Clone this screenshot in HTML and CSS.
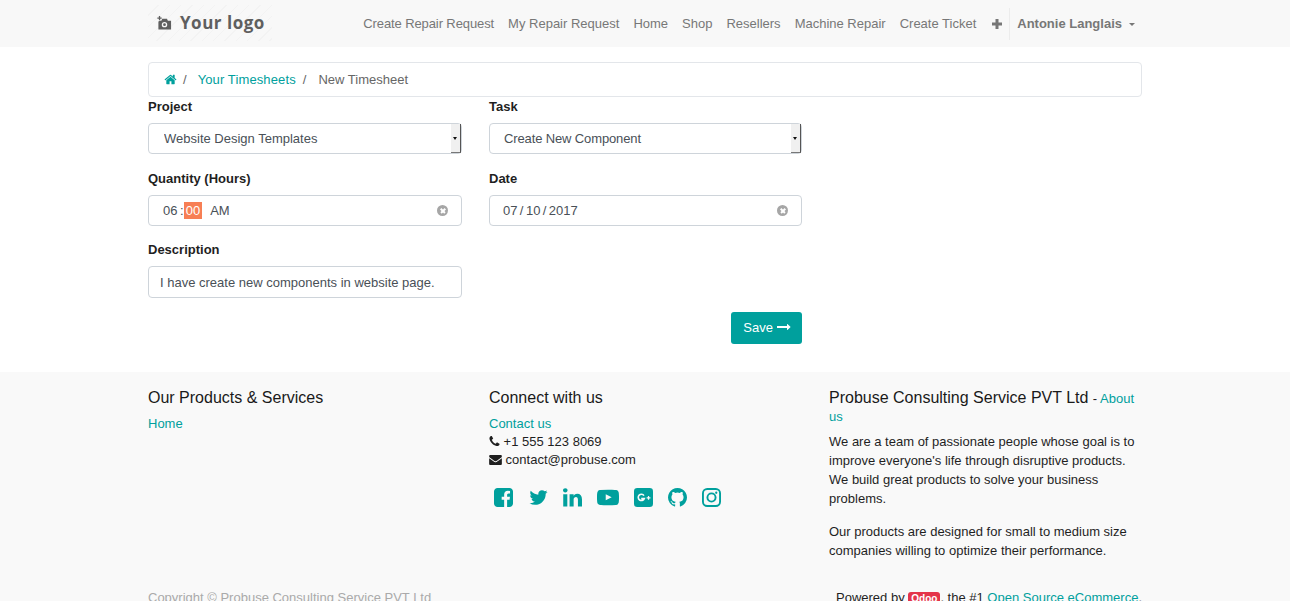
FILE: index.html
```html
<!DOCTYPE html>
<html lang="en">
<head>
  <meta charset="UTF-8">
  <meta name="viewport" content="width=device-width, initial-scale=1.0">
  <title>New Timesheet</title>
  <link rel="stylesheet" href="styles.css">
</head>
<body>
  <header class="navbar">
    <div class="container navbar-inner">
      <a class="logo" href="#">
        <svg class="logo-icon" viewBox="0 0 16 16"><path d="M2 0h1.400v1.600H5v1.300H3.400v1.500H2V2.900H.4V1.600H2zM3 5h1.600l1-2h5l1 2H15v9.500H1.500V5.800zM8 6.300a2.900 2.900 0 1 0 0 5.800 2.900 2.900 0 0 0 0-5.800zm0 1.400a1.500 1.500 0 1 1 0 3 1.500 1.500 0 0 1 0-3z"/></svg>
        <span>Your logo</span>
      </a>
      <nav class="nav">
        <a href="#">Create Repair Request</a>
        <a href="#">My Repair Request</a>
        <a href="#">Home</a>
        <a href="#">Shop</a>
        <a href="#">Resellers</a>
        <a href="#">Machine Repair</a>
        <a href="#">Create Ticket</a>
        <a class="nav-plus" href="#"><svg viewBox="0 0 12 12"><path d="M4.500 1h3v3.500H11v3H7.500V11h-3V7.500H1v-3h3.500z"/></svg></a>
        <a class="nav-user" href="#">Antonie Langlais <span class="caret"></span></a>
      </nav>
    </div>
  </header>

  <main class="container">
    <ol class="breadcrumb">
      <li><a href="#"><svg class="icon-home" viewBox="0 0 1792 1792"><path d="M1472 992v480q0 26-19 45t-45 19h-384v-384h-256v384h-384q-26 0-45-19t-19-45v-480q0-1 .5-3t.5-3l575-474 575 474q1 2 1 6zm223-69l-62 74q-8 9-21 11h-3q-13 0-21-7l-692-577-692 577q-12 8-24 7-13-2-21-11l-62-74q-8-10-7-23.500t11-21.500l719-599q32-26 76-26t76 26l244 204v-195q0-14 9-23t23-9h192q14 0 23 9t9 23v408l219 182q10 8 11 21.500t-7 23.500z"/></svg></a></li>
      <li class="sep">/</li>
      <li><a class="crumb-link" href="#">Your Timesheets</a></li>
      <li class="sep">/</li>
      <li class="active">New Timesheet</li>
    </ol>

    <form class="form-grid">
      <div class="field">
        <label>Project</label>
        <div class="select-box">
          <select class="control"><option>Website Design Templates</option></select>
          <span class="select-arrow"></span>
        </div>
      </div>
      <div class="field">
        <label>Task</label>
        <div class="select-box">
          <select class="control select-task"><option>Create New Component</option></select>
          <span class="select-arrow"></span>
        </div>
      </div>
      <div class="field field-next">
        <label>Quantity (Hours)</label>
        <div class="control picker">
          <span class="hours">06 :</span><span class="picked">00</span><span class="ampm">AM</span>
          <span class="clear"></span>
        </div>
      </div>
      <div class="field field-next">
        <label>Date</label>
        <div class="control picker picker-date">
          <span>07 / 10 / 2017</span>
          <span class="clear"></span>
        </div>
      </div>
      <div class="field field-desc">
        <label>Description</label>
        <input class="control text-input" type="text" value="I have create new components in website page.">
      </div>
      <div class="form-actions">
        <button type="button" class="btn-save">Save <svg viewBox="0 0 1792 1792"><path d="M1728 893q0 14-10 24l-384 354q-16 14-35 6-19-9-19-29v-224h-1248q-14 0-23-9t-9-23v-192q0-14 9-23t23-9h1248v-224q0-21 19-29t35 5l384 350q10 10 10 23z"/></svg></button>
      </div>
    </form>
  </main>

  <footer class="footer">
    <div class="container">
      <div class="footer-cols">
        <div>
          <h4>Our Products &amp; Services</h4>
          <a href="#">Home</a>
        </div>
        <div>
          <h4>Connect with us</h4>
          <div class="contact-line"><a href="#">Contact us</a></div>
          <div class="contact-line"><svg class="icon-sm" viewBox="128 128 1536 1536"><path d="M1600 1240q0 27-10 70.500t-21 68.500q-21 50-122 106-94 51-186 51-27 0-53-3.500t-57.500-12.500-47-14.500-55.500-20.500-49-18q-98-35-175-83-127-79-264-216t-216-264q-48-77-83-175-3-9-18-49t-20.500-55.500-14.500-47-12.500-57.500-3.500-53q0-92 51-186 56-101 106-122 25-11 68.500-21t70.500-10q14 0 21 3 18 6 53 76 11 19 30 54t35 63.500 31 53.500q3 4 17.500 25t21.500 35.500 7 28.500q0 20-28.500 50t-62 55-62 53-28.500 46q0 9 5 22.500t8.500 20.500 14 24 11.500 19q76 137 174 235t235 174q2 1 19 11.500t24 14 20.500 8.500 22.500 5q18 0 46-28.500t53-62 55-62 50-28.500q14 0 28.500 7t35.500 21.500 25 17.500q25 15 53.500 31t63.500 35 54 30q70 35 76 53 3 7 3 21z"/></svg> +1 555 123 8069</div>
          <div class="contact-line"><svg class="icon-sm icon-mail" viewBox="0 256 1792 1408"><path d="M1792 710v794q0 66-47 113t-113 47h-1472q-66 0-113-47t-47-113v-794q44 49 101 87 362 246 497 345 57 42 92.500 65.500t94.500 48 110 24.500h2q51 0 110-24.500t94.500-48 92.500-65.500q170-123 498-345 57-39 100-87zm0-294q0 79-49 151t-122 123q-376 261-468 325-10 7-42.500 30.500t-54 38-52 32.500-57.500 27-50 9h-2q-23 0-50-9t-57.500-27-52-32.500-54-38-42.500-30.500q-91-64-262-182.500t-205-142.500q-62-42-117-115.500t-55-136.500q0-78 41.500-130t118.500-52h1472q65 0 112.500 47t47.500 113z"/></svg> contact@probuse.com</div>
          <div class="social">
            <a href="#"><svg viewBox="128 128 1536 1536"><path d="M1376 128q119 0 203.500 84.500t84.500 203.500v960q0 119-84.500 203.500t-203.500 84.500h-188v-595h199l30-232h-229v-148q0-56 23.500-84t91.500-28l122-1v-207q-63-9-178-9-136 0-217.500 80t-81.500 226v171h-200v232h200v595h-532q-119 0-203.500-84.500t-84.500-203.500v-960q0-119 84.500-203.500t203.500-84.500h960z"/></svg></a>
            <a class="social-tw" href="#"><svg viewBox="64 128 1664 1536"><path d="M1684 408q-67 98-162 167 1 14 1 42 0 130-38 259.500t-115.500 248.500-184.500 210.500-258 146-323 54.500q-271 0-496-145 35 4 78 4 225 0 401-138-105-2-188-64.500t-114-159.500q33 5 61 5 43 0 85-11-112-23-185.500-111.500t-73.500-205.500v-4q68 38 146 41-66-44-105-115t-39-154q0-88 44-163 121 149 294.500 238.500t371.500 99.500q-8-38-8-74 0-134 94.500-228.500t228.500-94.500q140 0 236 102 109-21 205-78-37 115-142 178 84-9 168-45z"/></svg></a>
            <a href="#"><svg viewBox="128 128 1536 1536"><path d="M477 625v991h-330v-991h330zm21-306q1 73-50.500 122t-135.500 49h-2q-82 0-132-49t-50-122q0-74 51.500-122.500t134.500-48.500 133 48.500 51 122.500zm1166 729v568h-329v-530q0-105-40.500-164.500t-126.500-59.500q-63 0-105.500 34.500t-63.500 85.500q-11 30-11 81v553h-329q2-399 2-647t-1-296l-1-48h329v144h-2q20-32 41-56t56.500-52 87-43.500 114.500-15.500q171 0 275 113.500t104 332.500z"/></svg></a>
            <a href="#"><svg class="wide" viewBox="0 128 1792 1536"><path d="M711 1128l484-250-484-253v503zm185-862q168 0 324.500 4.500t229.500 9.500l73 4q1 0 17 1.500t23 3 23.500 4.500 28.500 8 28 13 31 19.500 29 26.500q6 6 15.500 18.500t29 58.500 26.500 101q8 64 12.500 136.500t5.500 113.500v176q1 145-18 290-7 55-25 99.500t-32 61.500l-14 17q-14 15-29 26.500t-31 19-28 12.500-28.500 8-24 4.500-23 3-16.500 1.500q-251 19-627 19-207-2-359.500-6.500t-200.500-7.500l-49-4-36-4q-36-5-54.500-10t-51-21-56.500-41q-6-6-15.500-18.500t-29-58.500-26.500-101q-8-64-12.500-136.500t-5.500-113.500v-176q-1-145 18-290 7-55 25-99.500t32-61.500l14-17q14-15 29-26.500t31-19.500 28-13 28.500-8 23.500-4.500 23-3 17-1.500q251-18 627-18z"/></svg></a>
            <a href="#"><svg viewBox="0 0 20 20"><rect width="20" height="20" rx="3.500"/><path class="cut" d="M10.500 8a3.300 3.300 0 1 0 .3 3.200H7.600"/><path class="cut cut-thin" d="M13.300 10.300h4M15.300 8.300v4"/></svg></a>
            <a href="#"><svg viewBox="128 128 1536 1536"><path d="M1664 896q0 251-146.500 451.500t-378.500 277.500q-27 5-39.500-7t-12.500-30v-211q0-97-52-142 57-6 102.500-18t94-39 81-66.500 53-105 20.500-150.500q0-121-79-206 37-91-8-204-28-9-81 11t-92 44l-38 24q-93-26-192-26t-192 26q-16-11-42.500-27t-83.500-38.500-86-13.500q-44 113-7 204-79 85-79 206 0 85 20.500 150t52.500 105 80.500 67 94 39 102.500 18q-40 36-49 103-21 10-45 15t-57 5-65.500-21.500-55.500-62.500q-19-32-48.500-52t-49.500-24l-20-3q-21 0-29 4.500t-5 11.500 9 14 13 12l7 5q22 10 43.500 38t31.500 51l10 23q13 38 44 61.500t67 30 69.500 7 55.500-3.500l23-4q0 38 .5 89t.5 54q0 18-13 30t-40 7q-232-77-378.500-277.500t-146.500-451.500q0-209 103-385.500t279.500-279.500 385.500-103 385.500 103 279.500 279.500 103 385.500z"/></svg></a>
            <a href="#"><svg viewBox="0 0 20 20"><rect class="line" x="1" y="1" width="18" height="18" rx="4.500"/><circle class="line" cx="10" cy="10" r="4.300"/><circle cx="15" cy="5" r="1.200"/></svg></a>
          </div>
        </div>
        <div class="about">
          <h4 class="about-title">Probuse Consulting Service PVT Ltd <small>- <a href="#">About us</a></small></h4>
          <p>We are a team of passionate people whose goal is to improve everyone's life through disruptive products. We build great products to solve your business problems.</p>
          <p>Our products are designed for small to medium size companies willing to optimize their performance.</p>
        </div>
      </div>
      <div class="footer-bottom">
        <div class="copyright">Copyright &copy; Probuse Consulting Service PVT Ltd</div>
        <div class="powered">Powered by <span class="odoo-badge">Odoo</span>, the #1 <a href="#">Open Source eCommerce</a>.</div>
      </div>
    </div>
  </footer>
</body>
</html>
```

FILE: styles.css
```css
body {
  margin: 0;
  background-color: #fff;
  color: #1f1f1f;
  font-family: "Liberation Sans", Arial, sans-serif;
  font-size: 13px;
  line-height: 18px;
}

a {
  color: #00a09d;
  text-decoration: none;
}

.container {
  width: 994px;
  margin: 0 auto;
}

/* header */
.navbar {
  height: 47px;
  background-color: #f8f8f8;
}

.navbar-inner {
  display: flex;
  align-items: center;
  justify-content: space-between;
  height: 47px;
}

.logo {
  display: flex;
  align-items: center;
  gap: 8px;
  width: 124px;
  height: 36px;
  padding-left: 9px;
  box-sizing: border-box;
  margin-top: -1px;
  color: #5f5f5f;
  font-family: "Open Sans", sans-serif;
  font-size: 17px;
  font-weight: bold;
  letter-spacing: 0.5px;
  background: repeating-linear-gradient(135deg, #f8f8f8 0, #f8f8f8 7px, #f3f3f3 7px, #f3f3f3 8px);
}

.logo-icon {
  width: 15px;
  height: 15px;
  fill: #5f5f5f;
  fill-rule: evenodd;
}

.nav {
  display: flex;
  align-items: center;
  height: 47px;
}

.nav a {
  color: #777;
  padding: 0 7px;
}

.nav a:first-child {
  letter-spacing: -0.1px;
}

.nav-plus {
  display: flex;
  padding: 0 6px 0 8px !important;
}

.nav-plus svg {
  width: 12px;
  height: 12px;
  fill: #777;
}

.nav .nav-user {
  display: flex;
  align-items: center;
  height: 32px;
  margin-top: 1px;
  padding: 0 7px;
  border-left: 1px solid #ececec;
  font-weight: bold;
}

.caret {
  width: 0;
  height: 0;
  margin-left: 7px;
  border-top: 3px solid #777;
  border-left: 3px solid transparent;
  border-right: 3px solid transparent;
}

/* breadcrumb */
.breadcrumb {
  display: flex;
  align-items: center;
  height: 33px;
  margin: 15px 0 0;
  padding: 0 15px;
  list-style: none;
  border: 1px solid #e3e6ea;
  border-radius: 4px;
  color: #666;
}

.sep {
  margin: 0 11px 0 6px;
}

.sep:nth-child(4) {
  margin: 0 12px 0 7px;
}

.crumb-link {
  letter-spacing: 0.12px;
}

.icon-home {
  display: block;
  width: 13px;
  height: 13px;
  fill: #00a09d;
}

.active {
  color: #666;
}

/* form */
.form-grid {
  display: grid;
  grid-template-columns: 314px 313px;
  column-gap: 27px;
  margin-top: 1px;
}

.field label {
  display: block;
  margin-bottom: 7px;
  font-weight: bold;
}

.field-next {
  margin-top: 16px;
}

.field-desc {
  grid-column: 1;
  margin-top: 15px;
}

.control {
  display: block;
  box-sizing: border-box;
  width: 100%;
  height: 31px;
  border: 1px solid #ced4da;
  border-radius: 4px;
  background-color: #fff;
  color: #495057;
  font-family: "Liberation Sans", Arial, sans-serif;
  font-size: 13px;
}

select.control {
  padding-left: 15px;
  appearance: none;
}

select.select-task {
  padding-left: 14px;
  letter-spacing: -0.13px;
}

.select-box {
  position: relative;
}

.select-arrow {
  position: absolute;
  top: 1px;
  right: 1px;
  width: 10px;
  height: 29px;
  box-sizing: border-box;
  background-color: #f0f0f0;
  border-right: 1px solid #555;
  border-bottom: 1px solid #777;
}

.select-arrow::after {
  content: "";
  position: absolute;
  top: 13px;
  left: 2px;
  border-top: 3px solid #111;
  border-left: 2.500px solid transparent;
  border-right: 2.500px solid transparent;
}

.picker {
  display: flex;
  align-items: center;
  position: relative;
  padding-left: 14px;
}

.hours {
  word-spacing: -1px;
  margin-right: 1px;
}

.picker-date {
  padding-left: 13px;
  word-spacing: -1.2px;
}

.picked {
  height: 17px;
  line-height: 17px;
  margin-left: -1px;
  padding: 0 2px;
  background-color: #f77f55;
  color: #fff;
}

.ampm {
  margin-left: 8px;
}

.clear {
  position: absolute;
  top: 9px;
  right: 13px;
  width: 11px;
  height: 11px;
  border-radius: 50%;
  background-color: #a6a6a6;
}

.clear::before,
.clear::after {
  content: "";
  position: absolute;
  top: 5px;
  left: 2.500px;
  width: 6px;
  height: 1.500px;
  background-color: #fff;
  transform: rotate(45deg);
}

.clear::after {
  transform: rotate(-45deg);
}

.text-input {
  height: 32px;
  padding: 0 11px;
}

.form-actions {
  grid-column: 1 / 3;
  display: flex;
  justify-content: flex-end;
  margin-top: 14px;
}

.btn-save {
  display: flex;
  align-items: center;
  gap: 4px;
  height: 32px;
  padding: 0 11px 2px 12px;
  border: none;
  border-radius: 3px;
  background-color: #00a09d;
  color: #fff;
  font-family: "Liberation Sans", Arial, sans-serif;
  font-size: 13px;
}

.btn-save svg {
  width: 14px;
  height: 14px;
  fill: #fff;
}

/* footer */
.footer {
  margin-top: 28px;
  padding-top: 16px;
  background-color: #f9f9f9;
}

.footer-cols {
  display: grid;
  grid-template-columns: 341px 340px 313px;
}

.footer h4 {
  margin: 0 0 7px;
  font-size: 16px;
  font-weight: normal;
  line-height: 20px;
  color: #1a1a1a;
}

.about {
  padding-top: 1px;
}

.footer .about-title {
  line-height: 18px;
}

.about-title small {
  font-size: 13px;
  line-height: 14px;
}

.contact-line {
  height: 18px;
}

.icon-sm {
  width: 11px;
  height: 11px;
  vertical-align: -1px;
  fill: #1f1f1f;
}

.icon-mail {
  width: 13px;
  height: 10px;
  vertical-align: -1px;
}

.footer p {
  margin: 0 0 14px;
  line-height: 19px;
}

.social {
  display: flex;
  align-items: center;
  gap: 15px;
  margin: 19px 0 0 5px;
}

.social a {
  display: flex;
}

.social-tw {
  margin-left: 1px;
}

.social svg {
  width: 19px;
  height: 19px;
  fill: #00a09d;
}

.social svg.wide {
  width: 22px;
}

.social .cut {
  fill: none;
  stroke: #f9f9f9;
  stroke-width: 1.700;
}

.social .cut-thin {
  stroke-width: 1.300;
}

.social .line {
  fill: none;
  stroke: #00a09d;
  stroke-width: 2;
}

.footer-bottom {
  display: flex;
  justify-content: space-between;
  padding: 15px 0 10px;
}

.copyright {
  color: #aaa;
}

.odoo-badge {
  display: inline-block;
  padding: 0 3px;
  border-radius: 3px;
  background-color: #e4344a;
  color: #fff;
  font-size: 10px;
  font-weight: bold;
  line-height: 14px;
}
```
